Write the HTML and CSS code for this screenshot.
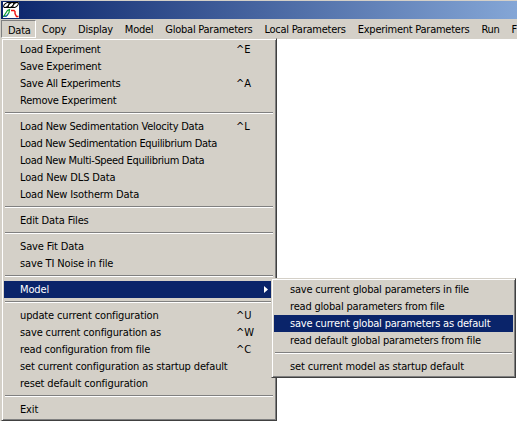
FILE: index.html
```html
<!DOCTYPE html>
<html lang="en">
<head>
<meta charset="utf-8">
<title>Data menu</title>
<link rel="stylesheet" href="styles.css">
</head>
<body>
<div class="window">
  <header class="titlebar">
    <svg class="appicon" width="16" height="16" viewBox="0 0 16 16">
      <rect width="16" height="16" fill="#fff"/>
      <g fill="#fff" stroke="#000" stroke-width="1">
        <ellipse cx="3.4" cy="3" rx="3.2" ry="1.7" transform="rotate(-40 3.4 3)"/>
        <ellipse cx="8" cy="3" rx="3.2" ry="1.7" transform="rotate(-40 8 3)"/>
        <ellipse cx="12.6" cy="3" rx="3.2" ry="1.7" transform="rotate(-40 12.6 3)"/>
      </g>
      <path d="M4 .5H15.5M1 5.5H12" stroke="#000"/>
      <path d="M.5 14.5L2.5 11.5L4.5 8.5L6.5 7.5L6 10.5L4 13.5Z" fill="none" stroke="#10a030" stroke-width="1.2"/>
      <path d="M1 14.5H3L5 12" fill="none" stroke="#2060c0" stroke-width="1.2"/>
      <path d="M8 8.5H11L12 9.5V11.5L13.5 14.5H15.5" fill="none" stroke="#f01010" stroke-width="1.4"/>
    </svg>
  </header>
  <nav class="menubar">
    <span class="open">Data</span><span>Copy</span><span>Display</span><span>Model</span><span>Global Parameters</span><span>Local Parameters</span><span>Experiment Parameters</span><span>Run</span><span>F</span>
  </nav>
  <main class="client"></main>
</div>
<ul class="menu main-menu">
  <li class="tight">Load Experiment<kbd>^E</kbd></li>
  <li class="tight">Save Experiment</li>
  <li class="tight">Save All Experiments<kbd>^A</kbd></li>
  <li class="tight">Remove Experiment</li>
  <li class="sep"></li>
  <li class="tight">Load New Sedimentation Velocity Data<kbd>^L</kbd></li>
  <li class="tighter">Load New Sedimentation Equilibrium Data</li>
  <li class="tighter">Load New Multi-Speed Equilibrium Data</li>
  <li>Load New DLS Data</li>
  <li>Load New Isotherm Data</li>
  <li class="sep"></li>
  <li>Edit Data Files</li>
  <li class="sep"></li>
  <li>Save Fit Data</li>
  <li>save TI Noise in file</li>
  <li class="sep"></li>
  <li class="selected">Model<svg class="arrow" width="4" height="7" viewBox="0 0 4 7"><path d="M0 0L4 3.5L0 7Z" fill="#fff"/></svg></li>
  <li class="sep"></li>
  <li>update current configuration<kbd>^U</kbd></li>
  <li>save current configuration as<kbd>^W</kbd></li>
  <li class="snug">read configuration from file<kbd>^C</kbd></li>
  <li>set current configuration as startup default</li>
  <li>reset default configuration</li>
  <li class="sep"></li>
  <li>Exit</li>
</ul>
<ul class="menu sub-menu">
  <li class="snug">save current global parameters in file</li>
  <li class="snug">read global parameters from file</li>
  <li class="selected snug">save current global parameters as default</li>
  <li class="snug">read default global parameters from file</li>
  <li class="sep"></li>
  <li>set current model as startup default</li>
</ul>
</body>
</html>
```
FILE: styles.css
```css
* { box-sizing: border-box; }
body {
  margin: 0;
  width: 517px;
  height: 421px;
  overflow: hidden;
  position: relative;
  background: #fff;
  color: #000;
  font: 11px/17px Tahoma, "DejaVu Sans Condensed", "DejaVu Sans", sans-serif;
  letter-spacing: -0.14px;
}
.window {
  height: 421px;
  padding-top: 1px;
  padding-left: 1px;
  background: #d4d0c8;
  display: flex;
  flex-direction: column;
}
.titlebar {
  height: 18px;
  padding: 1px 2px;
  background: linear-gradient(90deg, #0a246a, #84a6d6);
}
.appicon { display: block; }
.menubar {
  height: 20px;
  display: flex;
  white-space: nowrap;
  line-height: 20px;
  padding-top: 1px;
  letter-spacing: -0.25px;
}
.menubar span { padding: 0 6px; height: 18px; flex: none; }
.menubar .open {
  width: 35px;
  border: 1px solid;
  border-color: #808080 #fff #fff #808080;
}
.client { flex: 1; background: #fff; }
.menu {
  position: absolute;
  margin: 0;
  padding: 2px;
  list-style: none;
  background: #d4d0c8;
  border: 1px solid;
  border-color: #d4d0c8 #404040 #404040 #d4d0c8;
  box-shadow: inset 1px 1px #fff, inset -1px -1px #808080;
}
.main-menu { left: 1px; top: 38px; width: 276px; height: 383px; }
.sub-menu { left: 271px; top: 278px; width: 245px; height: 100px; }
.menu li {
  height: 17px;
  padding-left: 16px;
  display: flex;
  align-items: center;
  white-space: nowrap;
}
.menu .snug { letter-spacing: -0.19px; }
.menu .tight { letter-spacing: -0.24px; }
.menu .tighter { letter-spacing: -0.33px; }
.menu kbd {
  font: inherit;
  letter-spacing: 0;
  margin-left: auto;
  width: 38px;
}
.menu .selected { background: #0a246a; color: #fff; }
.arrow { margin-left: auto; margin-right: 6px; }
.menu .sep {
  height: 2px;
  margin: 3px 1px 4px;
  padding: 0;
  border-top: 1px solid #808080;
  border-bottom: 1px solid #fff;
}
```
